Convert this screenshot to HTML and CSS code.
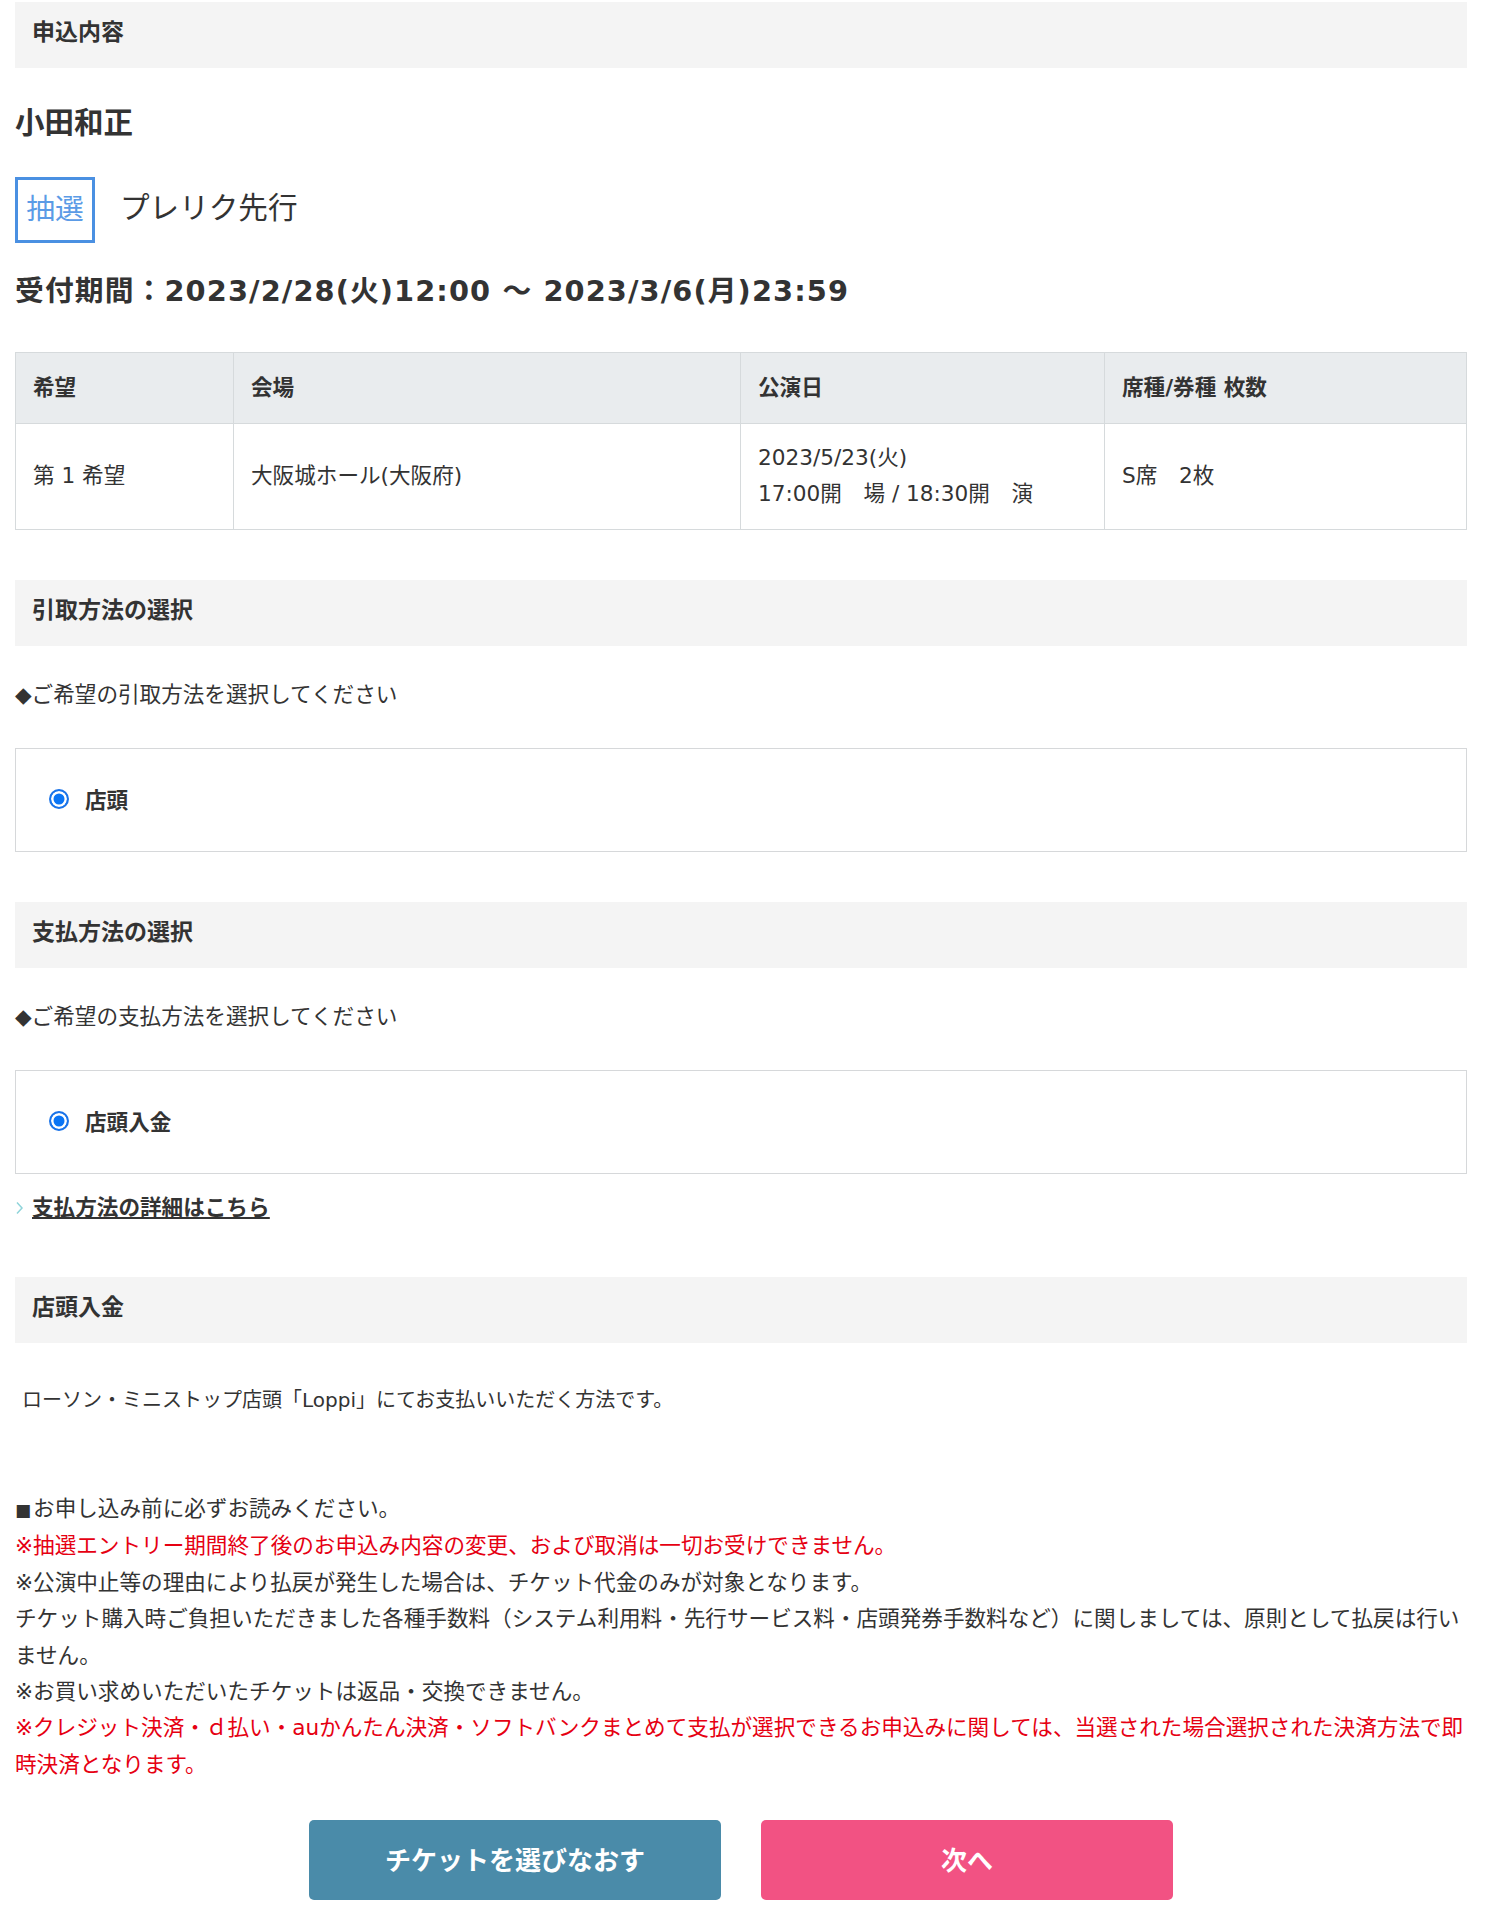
FILE: index.html
```
<!DOCTYPE html>
<html lang="ja">
<head>
    <meta charset="UTF-8">
    <meta name="viewport" content="width=device-width, initial-scale=1.0">
    <title>申込内容</title>
    <link rel="stylesheet" href="styles.css">
</head>
<body>
    <div class="page">
        <!-- 申込内容 -->
        <div class="sec-title">申込内容</div>

        <div class="artist">小田和正</div>

        <div class="event">
            <span class="badge">抽選</span>
            <span class="event-name">プレリク先行</span>
        </div>

        <div class="period">受付期間：2023/2/28(火)12:00 ～ 2023/3/6(月)23:59</div>

        <table class="apply-table">
            <thead>
                <tr>
                    <th class="col-hope">希望</th>
                    <th class="col-venue">会場</th>
                    <th class="col-date">公演日</th>
                    <th class="col-seat">席種/券種 枚数</th>
                </tr>
            </thead>
            <tbody>
                <tr>
                    <td>第 1 希望</td>
                    <td>大阪城ホール(大阪府)</td>
                    <td>2023/5/23(火)<br>17:00開　場 / 18:30開　演</td>
                    <td>S席　2枚</td>
                </tr>
            </tbody>
        </table>

        <!-- 引取方法 -->
        <div class="sec-title sec-gap">引取方法の選択</div>
        <p class="lead">◆ご希望の引取方法を選択してください</p>
        <div class="choice">
            <span class="radio"></span>
            <span class="choice-label">店頭</span>
        </div>

        <!-- 支払方法 -->
        <div class="sec-title sec-gap">支払方法の選択</div>
        <p class="lead">◆ご希望の支払方法を選択してください</p>
        <div class="choice">
            <span class="radio"></span>
            <span class="choice-label">店頭入金</span>
        </div>
        <a class="more-link" href="#">
            <svg width="9" height="14" viewBox="0 0 9 14"><path d="M2 1.5 L7 7 L2 12.5" fill="none" stroke="#8fd4da" stroke-width="1.5"/></svg>
            <span>支払方法の詳細はこちら</span>
        </a>

        <div class="sec-title sec-gap-sm">店頭入金</div>
        <p class="pay-desc">ローソン・ミニストップ店頭「Loppi」にてお支払いいただく方法です。</p>

        <div class="notes">
            <p><span class="square">■</span>お申し込み前に必ずお読みください。</p>
            <p class="red">※抽選エントリー期間終了後のお申込み内容の変更、および取消は一切お受けできません。</p>
            <p>※公演中止等の理由により払戻が発生した場合は、チケット代金のみが対象となります。</p>
            <p>チケット購入時ご負担いただきました各種手数料（システム利用料・先行サービス料・店頭発券手数料など）に関しましては、原則として払戻は行いません。</p>
            <p>※お買い求めいただいたチケットは返品・交換できません。</p>
            <p class="red">※クレジット決済・ｄ払い・auかんたん決済・ソフトバンクまとめて支払が選択できるお申込みに関しては、当選された場合選択された決済方法で即時決済となります。</p>
        </div>

        <div class="actions">
            <button class="btn btn-back">チケットを選びなおす</button>
            <button class="btn btn-next">次へ</button>
        </div>
    </div>
</body>
</html>
```

FILE: styles.css
```
* {
    margin: 0;
    padding: 0;
    box-sizing: border-box;
}

body {
    background: #fff;
    color: #333;
    font-family: "DejaVu Sans", "Noto Sans CJK JP", sans-serif;
    font-size: 21.6px;
}

.page {
    width: 1452px;
    margin-left: 15px;
    padding-top: 2px;
    padding-bottom: 40px;
}

.sec-title {
    background: #f4f4f4;
    height: 66px;
    padding-left: 17px;
    padding-bottom: 6px;
    display: flex;
    align-items: center;
    font-weight: bold;
    font-size: 23px;
    line-height: 1;
    color: #333;
}

.sec-gap {
    margin-top: 50px;
}

.sec-gap-sm {
    margin-top: 48px;
}

.artist {
    margin-top: 35px;
    font-size: 29.5px;
    font-weight: bold;
    line-height: 40px;
}

.event {
    margin-top: 34px;
    display: flex;
    align-items: center;
    gap: 25px;
}

.badge {
    width: 80px;
    height: 66px;
    padding-bottom: 7px;
    border: 3px solid #4a90e2;
    color: #5b9be6;
    font-size: 28.8px;
    display: flex;
    align-items: center;
    justify-content: center;
}

.event-name {
    font-size: 29.6px;
    margin-bottom: 9px;
}

.period {
    margin-top: 28px;
    font-size: 28.8px;
    font-weight: bold;
    line-height: 40px;
    letter-spacing: 1.1px;
}

.apply-table {
    margin-top: 41px;
    width: 100%;
    border-collapse: collapse;
    border: 1px solid #d6dadc;
}

.apply-table th,
.apply-table td {
    border: 1px solid #d6dadc;
    text-align: left;
    padding: 0 17px;
    vertical-align: middle;
}

.apply-table th {
    background: #e9ecee;
    height: 71px;
    padding-bottom: 6px;
    font-weight: bold;
}

.apply-table td {
    height: 106px;
    line-height: 36px;
    padding-bottom: 2px;
}

.col-hope { width: 218px; }
.col-venue { width: 507px; }
.col-date { width: 364px; }

.lead {
    margin-top: 31px;
    line-height: 36px;
}

.choice {
    margin-top: 35px;
    height: 104px;
    padding-bottom: 3px;
    border: 1px solid #d6d8da;
    display: flex;
    align-items: center;
    padding-left: 33px;
    gap: 16px;
}

.radio {
    flex: none;
    width: 20px;
    height: 20px;
    border-radius: 50%;
    border: 2px solid #1a73e8;
    background: #0a75f5;
    box-shadow: inset 0 0 0 2.5px #fff;
}

.choice-label {
    font-weight: bold;
}

.more-link {
    margin-top: 16px;
    padding-bottom: 3px;
    display: flex;
    align-items: center;
    gap: 8px;
    line-height: 36px;
    color: #333;
    font-weight: bold;
}

.more-link span {
    text-decoration: underline;
}

.pay-desc {
    margin-top: 39px;
    padding-left: 7px;
    font-size: 20px;
    line-height: 36px;
}

.notes {
    margin-top: 73px;
    line-height: 36.4px;
}

.notes .square {
    font-size: 17px;
    margin-right: 2px;
}

.notes .red {
    color: #e60012;
}

.actions {
    margin-top: 37px;
    display: flex;
    justify-content: center;
    gap: 40px;
}

.btn {
    width: 412px;
    height: 80px;
    padding-bottom: 4px;
    border: none;
    border-radius: 5px;
    color: #fff;
    font-family: "Noto Sans CJK JP", sans-serif;
    font-size: 26px;
    font-weight: bold;
    cursor: pointer;
}

.btn-back {
    background: #4a8ba9;
}

.btn-next {
    background: #f25283;
}
```
